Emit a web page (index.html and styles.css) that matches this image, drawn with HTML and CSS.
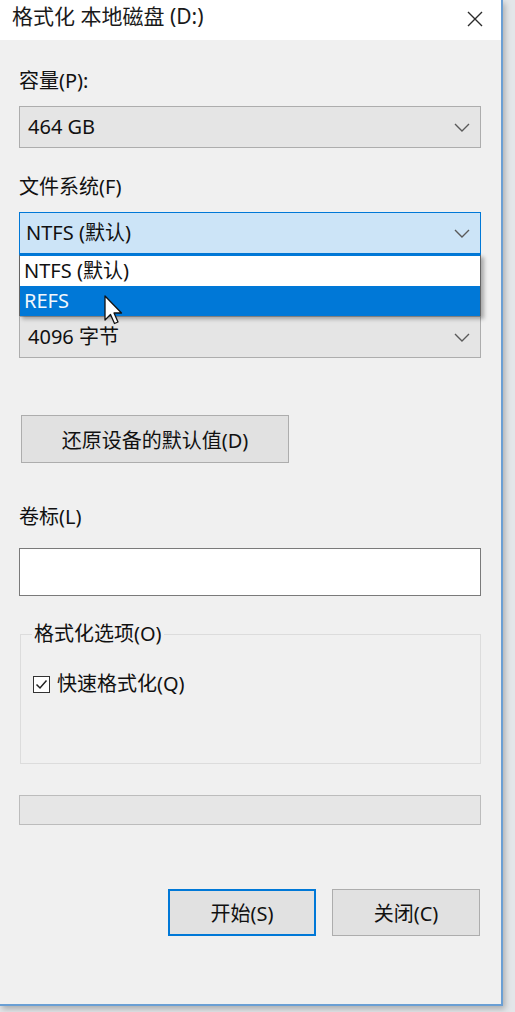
FILE: index.html
```html
<!DOCTYPE html>
<html lang="zh-CN">
<head>
<meta charset="utf-8">
<title>格式化 本地磁盘 (D:)</title>
<link rel="stylesheet" href="styles.css">
</head>
<body>
<div class="window">
  <div class="titlebar">
    <span class="title">格式化 本地磁盘 (D:)</span>
    <svg class="close" width="16" height="16" viewBox="0 0 16 16"><path d="M1 1 L15 15 M15 1 L1 15" stroke="#2b2b2b" stroke-width="1.4" fill="none"/></svg>
  </div>
  <div class="content">
    <div class="label l1">容量(P):</div>
    <div class="select s1"><span>464 GB</span><svg class="chev" width="16" height="9" viewBox="0 0 16 9"><path d="M1 1 L8 8 L15 1" stroke="#5a5a5a" stroke-width="1.4" fill="none"/></svg></div>

    <div class="label l2">文件系统(F)</div>
    <div class="select s2 focus"><span>NTFS (默认)</span><svg class="chev" width="16" height="9" viewBox="0 0 16 9"><path d="M1 1 L8 8 L15 1" stroke="#5a5a5a" stroke-width="1.4" fill="none"/></svg>
      <div class="dropdown">
        <div class="opt">NTFS (默认)</div>
        <div class="opt sel">REFS</div>
      </div>
    </div>

    <div class="label l3" aria-hidden="true"></div>
    <div class="select s3"><span>4096 字节</span><svg class="chev" width="16" height="9" viewBox="0 0 16 9"><path d="M1 1 L8 8 L15 1" stroke="#5a5a5a" stroke-width="1.4" fill="none"/></svg></div>

    <div class="btn restore">还原设备的默认值(D)</div>

    <div class="label l4">卷标(L)</div>
    <div class="input"></div>

    <fieldset class="group">
      <legend>格式化选项(O)</legend>
      <div class="check-row">
        <span class="checkbox"><svg width="15" height="15" viewBox="0 0 15 15"><path d="M2.5 7.5 L6 11 L12.5 3.5" stroke="#222" stroke-width="1.5" fill="none"/></svg></span>
        <span>快速格式化(Q)</span>
      </div>
    </fieldset>

    <div class="progress"></div>

    <div class="actions">
      <div class="btn primary">开始(S)</div>
      <div class="btn">关闭(C)</div>
    </div>
  </div>
  <svg class="cursor" width="22" height="32" viewBox="0 0 22 32"><path d="M1 1 L1 25 L6.5 19.5 L10.5 28.5 L14 27 L10 18 L17.5 18 Z" fill="#fff" stroke="#111" stroke-width="1.3" stroke-linejoin="round"/></svg>
</div>
</body>
</html>
```
FILE: styles.css
```css
html, body {
  margin: 0;
  padding: 0;
}
body {
  background: #e3e6e9;
  width: 515px;
  height: 1012px;
  overflow: hidden;
  font-family: "Noto Sans", "Noto Sans CJK SC", sans-serif;
  font-size: 20px;
  color: #111;
}
.window {
  position: relative;
  width: 501px;
  height: 1004px;
  background: #f0f0f0;
  border-right: 2px solid #6a9fd4;
  border-bottom: 2px solid #6a9fd4;
  box-shadow: 2px 3px 6px rgba(0,0,0,0.25);
}
.titlebar {
  height: 40px;
  background: #ffffff;
  display: flex;
  align-items: flex-start;
  justify-content: space-between;
  padding: 3px 18px 0 12px;
  box-sizing: border-box;
}
.title {
  font-size: 21px;
  line-height: 26px;
  color: #1a1a1a;
}
.close {
  margin-top: 8px;
}
.content {
  display: flex;
  flex-direction: column;
  padding: 0 20px 0 19px;
}
.label {
  line-height: 24px;
  height: 24px;
}
.l1 { margin-top: 29px; }
.l2 { margin-top: 27px; }
.l3 { margin-top: 27px; }
.l4 { margin-top: 42px; }
.select {
  position: relative;
  height: 42px;
  box-sizing: border-box;
  border: 1px solid #adadad;
  background: #e5e5e5;
  display: flex;
  align-items: center;
  justify-content: space-between;
  padding: 0 10px 0 8px;
}
.select span { line-height: 24px; }
.s1 { margin-top: 13px; }
.s2 { margin-top: 13px; }
.s3 { margin-top: 11px; }
.focus {
  background: #cce4f7;
  border-color: #0078d7;
  padding-left: 6px;
}
.dropdown {
  position: absolute;
  left: -1px;
  right: -1px;
  top: 41px;
  height: 62px;
  box-sizing: border-box;
  border: 1px solid #646464;
  border-top: 2px solid #0078d7;
  background: #fff;
  box-shadow: 3px 3px 4px rgba(0,0,0,0.3);
  z-index: 2;
  display: flex;
  flex-direction: column;
}
.opt {
  height: 30px;
  line-height: 30px;
  padding-left: 4px;
  color: #111;
}
.opt.sel {
  background: #0078d7;
  color: #f2f7fc;
}
.btn {
  height: 48px;
  box-sizing: border-box;
  border: 1px solid #adadad;
  background: #e1e1e1;
  display: flex;
  align-items: center;
  justify-content: center;
  color: #111;
}
.restore {
  margin-top: 57px;
  margin-left: 2px;
  width: 268px;
}
.input {
  margin-top: 19px;
  height: 48px;
  box-sizing: border-box;
  background: #fff;
  border: 1px solid #7a7a7a;
}
.group {
  margin: 26px 0 0 1px;
  padding: 0 0 67px 11px;
  border: 1px solid #dcdcdc;
  min-width: 0;
}
.group legend {
  padding: 0 2px;
  line-height: 24px;
}
.check-row {
  margin-top: 26px;
  display: flex;
  align-items: center;
  gap: 7px;
  line-height: 24px;
  height: 24px;
}
.checkbox {
  width: 17px;
  height: 17px;
  box-sizing: border-box;
  border: 1px solid #333;
  background: #fff;
  display: flex;
  align-items: center;
  justify-content: center;
  margin-left: 1px;
}
.progress {
  margin-top: 31px;
  height: 30px;
  box-sizing: border-box;
  border: 1px solid #bcbcbc;
  background: #e6e6e6;
}
.actions {
  margin-top: 64px;
  display: flex;
  justify-content: flex-end;
  gap: 16px;
  margin-right: 1px;
}
.actions .btn {
  width: 148px;
  height: 47px;
}
.btn.primary {
  border: 2px solid #0078d7;
}
.cursor {
  position: absolute;
  left: 104px;
  top: 295px;
  z-index: 3;
}
```
